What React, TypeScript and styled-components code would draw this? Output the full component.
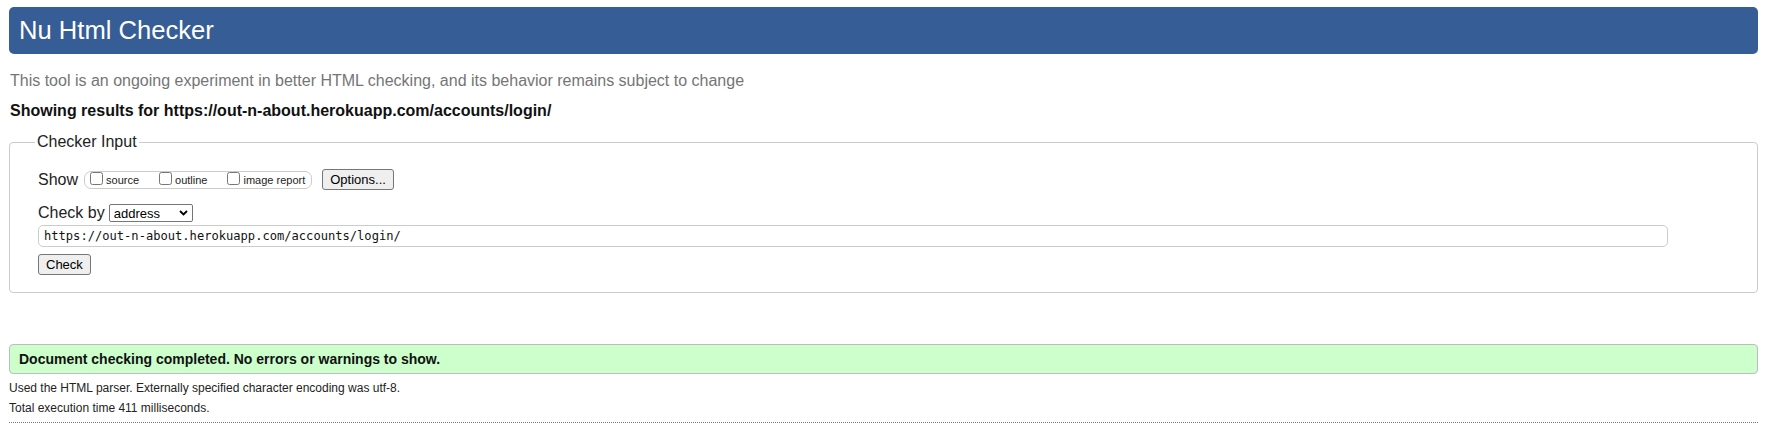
import React from "react";
import styled, { createGlobalStyle } from "styled-components";

const GlobalStyle = createGlobalStyle`
  html, body {
    margin: 0;
    padding: 0;
    background: #fff;
  }
  body {
    font-family: "Liberation Sans", Arial, sans-serif;
    color: #000;
  }
`;

const Page = styled.div`
  display: flex;
  flex-direction: column;
  padding: 7px 13px 0 9px;
`;

const Header = styled.header`
  height: 47px;
  display: flex;
  align-items: center;
  padding-left: 10px;
  background: #365d95;
  border-radius: 5px;
  color: #fff;
`;

const Title = styled.h1`
  margin: 0;
  font-size: 25.6px;
  font-weight: normal;
  line-height: 1;
`;

const Intro = styled.p`
  margin: 17px 0 0 1px;
  font-size: 16px;
  line-height: 20px;
  color: #757575;
`;

const Results = styled.p`
  margin: 10px 0 0 1px;
  font-size: 16px;
  line-height: 20px;
  font-weight: bold;
  color: #111;
`;

const Fieldset = styled.fieldset`
  margin: 12px 0 0;
  padding: 0 28px 17px;
  border: 1px solid #ccc;
  border-radius: 4px;
  min-width: 0;
`;

const Legend = styled.legend`
  padding: 0 2px;
  margin-left: -3px;
  font-size: 16px;
  line-height: 18px;
  color: #222;
`;

const Row = styled.div<{ $mt: number }>`
  display: flex;
  align-items: center;
  margin-top: ${(p) => p.$mt}px;
`;

const FieldLabel = styled.span<{ $gap: number }>`
  font-size: 16px;
  line-height: 18px;
  color: #222;
  margin-right: ${(p) => p.$gap}px;
`;

const OptionGroup = styled.div`
  display: inline-flex;
  align-items: flex-start;
  box-sizing: border-box;
  height: 18px;
  padding: 0 6px 0 5px;
  gap: 20px;
  border: 1px solid #ccc;
  border-radius: 7px;
  margin-right: 10px;
`;

const Option = styled.label`
  display: flex;
  align-items: flex-start;
  font-size: 11px;
  line-height: 13px;
  color: #222;

  input {
    margin: 0;
    width: 13px;
    height: 13px;
  }

  span {
    margin: 2px 0 0 3px;
  }
`;

const Button = styled.button`
  box-sizing: border-box;
  height: 21px;
  padding: 0 7px;
  font-family: "Liberation Sans", Arial, sans-serif;
  font-size: 13px;
  color: #000;
  background: #efefef;
  border: 1px solid #767676;
  border-radius: 3px;
`;

const SelectWrap = styled.div`
  position: relative;
  display: inline-flex;
`;

const Select = styled.select`
  appearance: none;
  box-sizing: border-box;
  width: 84px;
  height: 18px;
  padding: 0 0 0 4px;
  font-family: "Liberation Sans", Arial, sans-serif;
  font-size: 13px;
  color: #000;
  background: #fff;
  border: 1px solid #767676;
  border-radius: 2px;
`;

const Chevron = styled.svg`
  position: absolute;
  right: 5px;
  top: 6px;
  pointer-events: none;
`;

const UrlInput = styled.input`
  box-sizing: border-box;
  width: calc(100% - 61px);
  height: 22px;
  margin-top: 3px;
  padding: 0 5px;
  font-family: "DejaVu Sans Mono", "Liberation Mono", monospace;
  font-size: 12.1px;
  color: #111;
  border: 1px solid #ccc;
  border-radius: 5px;
  outline: none;
`;

const SubmitRow = styled.div`
  display: flex;
  margin-top: 7px;
`;

const Success = styled.div`
  box-sizing: border-box;
  height: 30px;
  margin-top: 51px;
  display: flex;
  align-items: center;
  padding-left: 9px;
  background: #ccffcc;
  border: 1px solid #bdbdbd;
  border-radius: 4px;
  font-size: 14px;
  line-height: 16px;
  font-weight: bold;
  color: #111;
`;

const Note = styled.p<{ $mt: number }>`
  margin: ${(p) => p.$mt}px 0 0;
  font-size: 12px;
  line-height: 20px;
  color: #222;
`;

const Rule = styled.hr`
  margin: 4px 0 0;
  border: 0;
  border-top: 1px dotted #777;
  height: 0;
`;

export default function App() {
  return (
    <>
      <GlobalStyle />
      <Page>
        <Header>
          <Title>Nu Html Checker</Title>
        </Header>
        <Intro>
          This tool is an ongoing experiment in better HTML checking, and its behavior remains subject to change
        </Intro>
        <Results>Showing results for https://out-n-about.herokuapp.com/accounts/login/</Results>

        <Fieldset>
          <Legend>Checker Input</Legend>
          <Row $mt={18}>
            <FieldLabel $gap={6}>Show</FieldLabel>
            <OptionGroup>
              <Option>
                <input type="checkbox" />
                <span>source</span>
              </Option>
              <Option>
                <input type="checkbox" />
                <span>outline</span>
              </Option>
              <Option>
                <input type="checkbox" />
                <span>image report</span>
              </Option>
            </OptionGroup>
            <Button type="button">Options...</Button>
          </Row>
          <Row $mt={14}>
            <FieldLabel $gap={4}>Check by</FieldLabel>
            <SelectWrap>
              <Select defaultValue="address">
                <option value="address">address</option>
                <option value="file">file upload</option>
                <option value="text">text input</option>
              </Select>
              <Chevron width="9" height="6" viewBox="0 0 9 6">
                <path d="M1 1l3.5 3.5L8 1" fill="none" stroke="#000" strokeWidth="1.8" />
              </Chevron>
            </SelectWrap>
          </Row>
          <UrlInput type="url" defaultValue="https://out-n-about.herokuapp.com/accounts/login/" />
          <SubmitRow>
            <Button type="submit">Check</Button>
          </SubmitRow>
        </Fieldset>

        <Success>Document checking completed. No errors or warnings to show.</Success>
        <Note $mt={4}>Used the HTML parser. Externally specified character encoding was utf-8.</Note>
        <Note $mt={0}>Total execution time 411 milliseconds.</Note>
        <Rule />
      </Page>
    </>
  );
}
